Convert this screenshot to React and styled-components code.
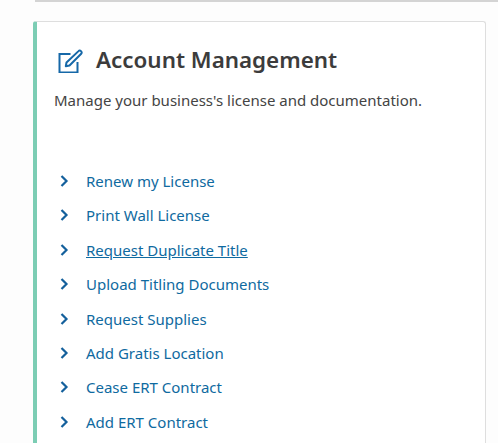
import React from "react";
import styled, { createGlobalStyle } from "styled-components";

const links = [
  "Renew my License",
  "Print Wall License",
  "Request Duplicate Title",
  "Upload Titling Documents",
  "Request Supplies",
  "Add Gratis Location",
  "Cease ERT Contract",
  "Add ERT Contract",
];

const GlobalStyle = createGlobalStyle`
  html, body {
    margin: 0;
    height: 443px;
    overflow: hidden;
    background: #fdfdfd;
    font-family: "Noto Sans", "Open Sans", sans-serif;
  }
`;

const Page = styled.div`
  padding-left: 33px;
  padding-right: 12px;
`;

const TopRule = styled.div`
  border-top: 2px solid #d4d4d4;
  margin-left: 2px;
  margin-right: -12px;
  margin-bottom: 19px;
`;

const Card = styled.section`
  background: #fff;
  border: 1px solid #dedede;
  border-bottom: 0;
  border-left: 4px solid #7ccdb4;
  border-radius: 3px 3px 0 0;
  padding: 22px 20px 12px 17px;
`;

const Header = styled.header`
  align-items: center;
  display: flex;
  gap: 13px;
  margin-left: 3px;
`;

const Title = styled.h2`
  color: #3c3c3c;
  font-size: 22.4px;
  font-weight: 600;
  line-height: 32px;
  margin: 0;
`;

const Intro = styled.p`
  color: #444;
  font-size: 15px;
  line-height: 20px;
  margin: 14px 0 0;
`;

const LinkList = styled.ul`
  display: flex;
  flex-direction: column;
  gap: 14.4px;
  list-style: none;
  margin: 61px 0 0;
  padding: 0;
`;

const LinkRow = styled.li`
  align-items: center;
  display: flex;
  gap: 16px;
  height: 20px;
  padding-left: 5px;
`;

const Chevron = styled.svg`
  flex: none;
  height: 12px;
  width: 11px;
`;

const RowLink = styled.a`
  color: #0f6aa0;
  font-size: 15px;
  line-height: 20px;
  text-decoration: ${props => (props.$active ? "underline" : "none")};
`;

const EditIcon = () => (
  <svg width="26" height="26" viewBox="0 0 26 26" fill="none" stroke="#1668a8" strokeWidth="2">
    <path d="M13.5 7H2.5v18.5h18V15" />
    <path d="M9.5 15.5l-0.7 3.7 3.7-0.7L24.2 6.8c0.7-0.7 0.7-1.7 0-2.4l-0.3-0.3c-0.7-0.7-1.7-0.7-2.4 0z" strokeLinejoin="round" />
  </svg>
);

const App = () => (
  <Page>
    <GlobalStyle />
    <TopRule />
    <Card>
      <Header>
        <EditIcon />
        <Title>Account Management</Title>
      </Header>
      <Intro>Manage your business's license and documentation.</Intro>
      <LinkList>
        {links.map(label => (
          <LinkRow key={label}>
            <Chevron viewBox="0 0 11 12" fill="none" stroke="#14609c" strokeWidth="2.2">
              <path d="M2.5 1l5 5-5 5" />
            </Chevron>
            <RowLink href="#" $active={label === "Request Duplicate Title"}>
              {label}
            </RowLink>
          </LinkRow>
        ))}
      </LinkList>
    </Card>
  </Page>
);

export default App;
